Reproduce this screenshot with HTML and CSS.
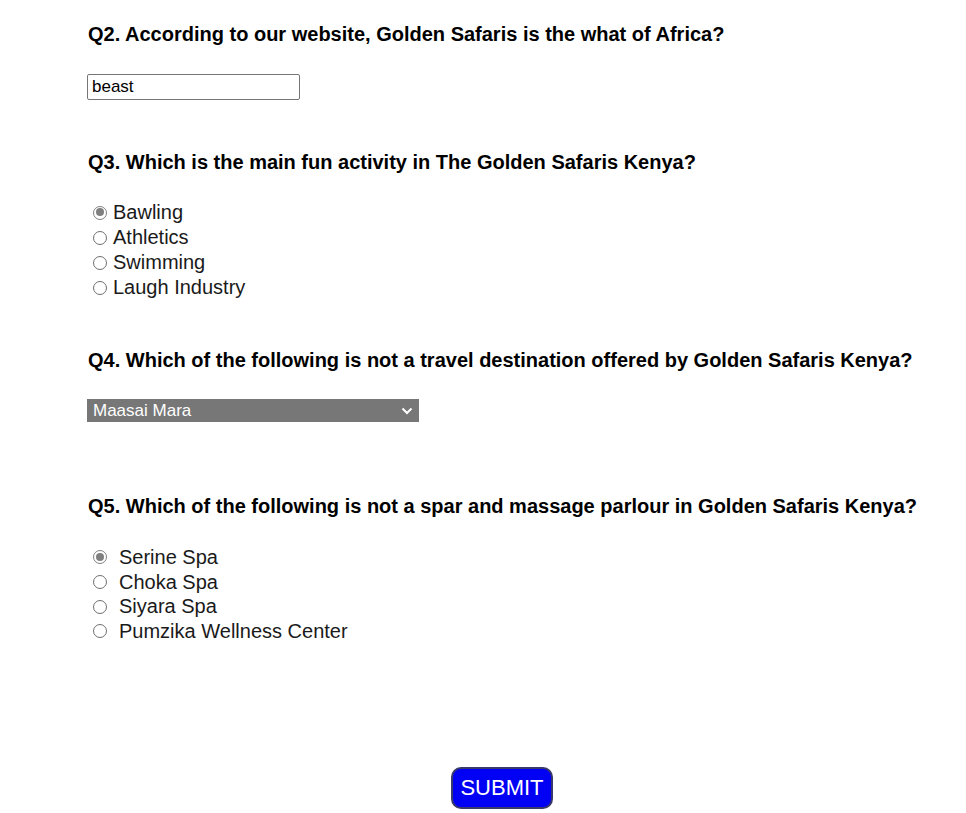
FILE: index.html
```html
<!DOCTYPE html>
<html>
<head>
<meta charset="utf-8">
<link rel="stylesheet" href="styles.css">
</head>
<body>
<form class="quiz">
  <section class="q q2">
    <h3 class="qtitle">Q2. According to our website, Golden Safaris is the what of Africa?</h3>
    <input class="text-in" type="text" value="beast">
  </section>
  <section class="q q3">
    <h3 class="qtitle">Q3. Which is the main fun activity in The Golden Safaris Kenya?</h3>
    <div class="opts">
      <label class="opt"><span class="radio checked"></span>Bawling</label>
      <label class="opt"><span class="radio"></span>Athletics</label>
      <label class="opt"><span class="radio"></span>Swimming</label>
      <label class="opt"><span class="radio"></span>Laugh Industry</label>
    </div>
  </section>
  <section class="q q4">
    <h3 class="qtitle">Q4. Which of the following is not a travel destination offered by Golden Safaris Kenya?</h3>
    <div class="select">
      <span>Maasai Mara</span>
      <svg class="chev" width="12" height="8" viewBox="0 0 12 8"><path d="M1.5 1.5 L6 6 L10.5 1.5" fill="none" stroke="#fff" stroke-width="2"/></svg>
    </div>
  </section>
  <section class="q q5">
    <h3 class="qtitle">Q5. Which of the following is not a spar and massage parlour in Golden Safaris Kenya?</h3>
    <div class="opts wide">
      <label class="opt"><span class="radio checked"></span>Serine Spa</label>
      <label class="opt"><span class="radio"></span>Choka Spa</label>
      <label class="opt"><span class="radio"></span>Siyara Spa</label>
      <label class="opt"><span class="radio"></span>Pumzika Wellness Center</label>
    </div>
  </section>
  <div class="actions">
    <button type="button" class="submit">SUBMIT</button>
  </div>
</form>
</body>
</html>
```
FILE: styles.css
```css
html, body {
  margin: 0;
  padding: 0;
  background: #fff;
}
body {
  font-family: "Liberation Sans", Arial, sans-serif;
  color: #000;
}
.quiz {
  padding: 23px 0 0 87px;
  display: flex;
  flex-direction: column;
}
.qtitle {
  margin: 0 0 0 1px;
  font-size: 20px;
  font-weight: bold;
  line-height: 23px;
  color: #000;
}
.q2 .text-in {
  margin-top: 28px;
}
.text-in {
  display: block;
  width: 213px;
  height: 26px;
  box-sizing: border-box;
  border: 1px solid #767676;
  border-radius: 2px;
  padding: 1px 4px;
  font-family: "Liberation Sans", Arial, sans-serif;
  font-size: 17px;
  color: #000;
  background: #fff;
}
.q3 {
  margin-top: 51px;
}
.opts {
  margin-top: 26px;
  display: flex;
  flex-direction: column;
}
.opt {
  display: flex;
  align-items: center;
  height: 25px;
  font-size: 20px;
  color: #1a1a1a;
  padding-left: 7px;
}
.radio {
  width: 14px;
  height: 14px;
  box-sizing: border-box;
  border: 1px solid #6f6f6f;
  border-radius: 50%;
  margin-left: -1px;
  margin-right: 6px;
  position: relative;
  flex: none;
}
.radio.checked {
  border: 1.5px solid #7f7f7f;
}
.radio.checked::after {
  content: "";
  position: absolute;
  left: 1.5px;
  top: 1.5px;
  width: 8px;
  height: 8px;
  border-radius: 50%;
  background: #7f7f7f;
}
.wide .radio {
  margin-right: 12px;
}
.q4 {
  margin-top: 49px;
}
.select {
  margin-top: 27px;
  width: 332px;
  height: 23px;
  box-sizing: border-box;
  background: #777;
  color: #fff;
  font-size: 17px;
  display: flex;
  align-items: center;
  justify-content: space-between;
  padding: 0 6px 0 6px;
}
.q5 {
  margin-top: 73px;
}
.q5 .opts {
  margin-top: 27px;
}
.q5 .opt {
  height: 24.7px;
}
.actions {
  display: flex;
  justify-content: flex-start;
  margin-top: 123px;
  padding-left: 364px;
}
.submit {
  width: 102px;
  height: 42px;
  box-sizing: border-box;
  background: #0000f5;
  color: #fff;
  border: 2px solid #3a3a6a;
  border-radius: 10px;
  font-family: "Liberation Sans", Arial, sans-serif;
  font-size: 22px;
  padding: 0;
}
```
